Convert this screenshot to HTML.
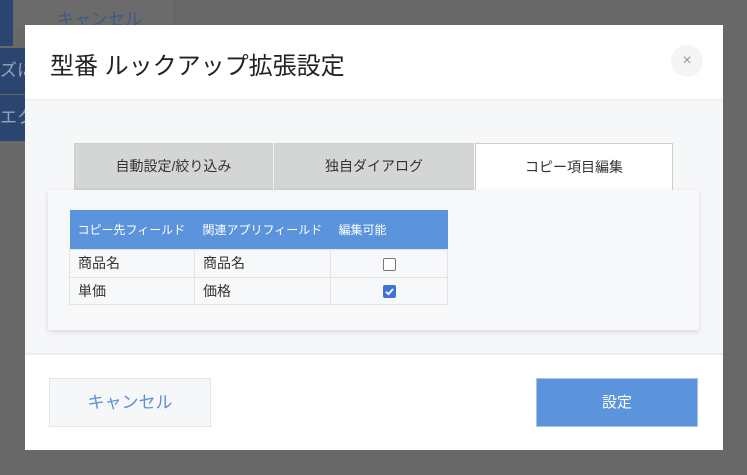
<!DOCTYPE html>
<html><head><meta charset="utf-8"><style>
*{box-sizing:border-box;margin:0;padding:0}
body{width:747px;height:475px;background:#686868;position:relative;overflow:hidden;font-family:"Liberation Sans","Noto Sans CJK JP",sans-serif}
.abs{position:absolute}
</style></head><body>
<div class="abs" style="left:0;top:0;width:13px;height:46px;background:#2a4670"></div>
<div class="abs" style="left:15px;top:0;width:160px;height:26px;background:#6b6b6b;border-right:1px solid #5e5e5e;color:#3f5a86;font-size:17px;padding-left:42px;line-height:40px;overflow:hidden">キャンセル</div>
<div class="abs" style="left:0;top:48px;width:30px;height:46px;background:#2a4670;color:#9aa4b6;font-size:17px;line-height:46px;overflow:hidden;white-space:nowrap">ズに</div>
<div class="abs" style="left:0;top:95px;width:30px;height:46px;background:#2a4670;color:#9aa4b6;font-size:17px;line-height:46px;overflow:hidden;white-space:nowrap">エク</div>

<div class="abs" style="left:25px;top:25px;width:698px;height:425px;background:#f6f7f9">
  <div class="abs" style="left:0;top:0;width:698px;height:76px;background:#fff;border-bottom:2px solid #eef0f3">
    <div class="abs" style="left:25px;top:21px;font-size:24px;color:#222">型番 ルックアップ拡張設定</div>
    <div class="abs" style="left:646px;top:20px;width:32px;height:32px;border-radius:50%;background:#f4f5f7;color:#999;font-size:16px;text-align:center;line-height:31px">×</div>
  </div>
  <div class="abs" style="left:49px;top:118px;width:199px;height:47px;background:#d4d6d6;border:1px solid #cfd1d1;font-size:14px;color:#333;text-align:center;line-height:45px">自動設定/絞り込み</div>
  <div class="abs" style="left:249px;top:118px;width:200px;height:47px;background:#d4d6d6;border:1px solid #cfd1d1;font-size:14px;color:#333;text-align:center;line-height:45px">独自ダイアログ</div>
  <div class="abs" style="left:450px;top:118px;width:198px;height:48px;background:#fff;border:1px solid #ccc;border-bottom:none;font-size:14px;color:#333;text-align:center;line-height:46px">コピー項目編集</div>
  <div class="abs" style="left:23px;top:165px;width:651px;height:140px;background:#f7f8fa;box-shadow:0 2px 5px rgba(0,0,0,.12)">
    <table class="abs" style="left:21px;top:20px;border-collapse:collapse;font-size:14px;color:#333">
      <tr style="background:#5b93dc;color:#fff;height:39px;font-size:12px">
        <td style="width:125px;padding-left:8px">コピー先フィールド</td>
        <td style="width:136px;padding-left:8px">関連アプリフィールド</td>
        <td style="width:117px;padding-left:8px">編集可能</td>
      </tr>
      <tr style="height:28px">
        <td style="border:1px solid #e3e3e3;padding-left:8px">商品名</td>
        <td style="border:1px solid #e3e3e3;padding-left:8px">商品名</td>
        <td style="border:1px solid #e3e3e3;text-align:center"><span style="display:inline-block;width:13px;height:13px;border:1px solid #777;border-radius:2px;background:#fff;vertical-align:middle"></span></td>
      </tr>
      <tr style="height:27px">
        <td style="border:1px solid #e3e3e3;padding-left:8px">単価</td>
        <td style="border:1px solid #e3e3e3;padding-left:8px">価格</td>
        <td style="border:1px solid #e3e3e3;text-align:center"><svg width="13" height="13" style="vertical-align:middle"><rect width="13" height="13" rx="2" fill="#3f73d8"/><path d="M3 6.8 5.4 9.2 10 4" stroke="#fff" stroke-width="1.8" fill="none"/></svg></td>
      </tr>
    </table>
  </div>
  <div class="abs" style="left:0;top:328px;width:698px;height:97px;background:#fff;border-top:2px solid #eceef1">
    <div class="abs" style="left:24px;top:23px;width:162px;height:49px;background:#f6f7f9;border:1px solid #e3e6ea;color:#5b8fd9;font-size:17px;text-align:center;line-height:47px">キャンセル</div>
    <div class="abs" style="left:511px;top:23px;width:162px;height:49px;background:#5b93dc;border:1px solid #a9c3ec;color:#fff;font-size:15px;text-align:center;line-height:47px">設定</div>
  </div>
</div>
</body></html>
